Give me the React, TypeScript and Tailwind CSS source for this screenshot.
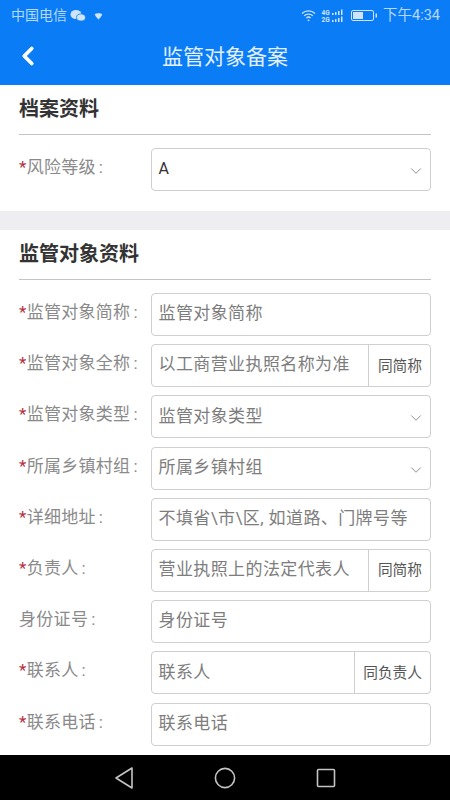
import React from 'react';
import { ChevronLeft, ChevronDown } from 'lucide-react';

type Field = {
  label: string;
  value: string;
  required?: boolean;
  select?: boolean;
  action?: string;
  dark?: boolean;
};

const riskFields: Field[] = [{ label: '风险等级', value: 'A', required: true, select: true, dark: true }];

const targetFields: Field[] = [
  { label: '监管对象简称', value: '监管对象简称', required: true },
  { label: '监管对象全称', value: '以工商营业执照名称为准', required: true, action: '同简称' },
  { label: '监管对象类型', value: '监管对象类型', required: true, select: true },
  { label: '所属乡镇村组', value: '所属乡镇村组', required: true, select: true },
  { label: '详细地址', value: '不填省\\市\\区, 如道路、门牌号等', required: true },
  { label: '负责人', value: '营业执照上的法定代表人', required: true, action: '同简称' },
  { label: '身份证号', value: '身份证号' },
  { label: '联系人', value: '联系人', required: true, action: '同负责人' },
  { label: '联系电话', value: '联系电话', required: true },
];

const FormRow = ({ field }: { field: Field }) => (
  <div className="flex h-[43px] items-start">
    <div className="w-[151px] shrink-0 pt-[9px] pl-[19px] text-[17px] leading-[20px] tracking-[0.3px] whitespace-nowrap text-[#8a8a8a]">
      {field.required && <span className="text-[#b5313f]">*</span>}
      {field.label}
      <span className="ml-[3px]">:</span>
    </div>
    <div className="flex h-[43px] w-[280px] items-center rounded-[4px] border border-[#cfcfcf] bg-white">
      <span
        className={`flex-1 pb-[1px] pl-[6.5px] whitespace-nowrap ${
          field.dark ? 'text-[16px] text-[#333]' : 'text-[17px] tracking-[0.4px] text-[#7d7d7d]'
        }`}
      >
        {field.value}
      </span>
      {field.select && <ChevronDown size={18} strokeWidth={1.1} className="mr-[5px] mt-[3px] text-[#777]" />}
      {field.action && (
        <span className="flex h-full items-center border-l border-[#cfcfcf] pr-[8px] pl-[8.5px] text-[14.7px] whitespace-nowrap text-[#555]">
          {field.action}
        </span>
      )}
    </div>
  </div>
);

const SectionTitle = ({ title }: { title: string }) => (
  <div className="mx-[19px] mb-[13px] flex h-[50px] items-center border-b border-[#c4c4c4] pb-[1px] text-[20px] font-bold text-[#333]">
    {title}
  </div>
);

export default function App() {
  return (
    <div
      className="flex h-[800px] w-[450px] flex-col overflow-hidden bg-white"
      style={{ fontFamily: '"Roboto", "Noto Sans CJK SC", sans-serif' }}
    >
      <header className="h-[85px] shrink-0 bg-[#0a7cf6]">
        <div className="flex h-[31px] items-center justify-between pr-[10px] pl-[11px] text-[14px] text-[#b5d8fb]">
          <div className="flex items-center gap-[3px]">
            <span>中国电信</span>
            <svg width="16" height="13" viewBox="0 0 16 13" fill="#cfe4fb">
              <ellipse cx="6" cy="5.5" rx="5.5" ry="4.6" />
              <ellipse cx="11" cy="8.5" rx="4.5" ry="3.6" stroke="#0a7cf6" strokeWidth="0.8" />
            </svg>
            <svg width="9" height="8" viewBox="0 0 12 10" fill="#cfe4fb" className="ml-[5px]">
              <path d="M1 2.5C3 0.8 9 0.8 11 2.5C10.5 5 8 7 6 9.5C4 7 1.5 5 1 2.5Z" />
            </svg>
          </div>
          <div className="flex items-center">
            <svg width="15" height="13" viewBox="0 0 15 13" fill="none" stroke="#cfe4fb" strokeWidth="1.3" className="mr-[5px]">
              <path d="M1 4.5C4.5 1 10.5 1 14 4.5" />
              <path d="M3.2 6.8C5.5 4.6 9.5 4.6 11.8 6.8" />
              <path d="M5.4 9C6.5 8 8.5 8 9.6 9" />
              <circle cx="7.5" cy="11.3" r="0.9" fill="#cfe4fb" stroke="none" />
            </svg>
            <svg width="25" height="14" viewBox="0 0 25 14" fill="#cfe4fb" className="mr-[5px]">
              <rect x="11" y="4" width="1.5" height="2" />
              <rect x="14" y="3" width="1.5" height="3" />
              <rect x="17" y="2" width="1.5" height="4" />
              <rect x="20" y="0.5" width="1.5" height="5.5" />
              <rect x="11" y="11" width="1.5" height="2" />
              <rect x="14" y="10" width="1.5" height="3" />
              <rect x="17" y="9" width="1.5" height="4" />
              <rect x="20" y="7.5" width="1.5" height="5.5" />
              <text x="0.5" y="6" fontSize="6.5" fontWeight="700">4G</text>
              <text x="0.5" y="13" fontSize="6.5" fontWeight="700">2G</text>
            </svg>
            <svg width="27" height="11" viewBox="0 0 27 11" className="mr-[5px]">
              <rect x="0.5" y="0.5" width="22" height="10" rx="1.5" fill="none" stroke="#cfe4fb" />
              <rect x="2" y="2" width="10" height="7" fill="#cfe4fb" />
              <rect x="24.5" y="3.5" width="1.5" height="4" fill="#cfe4fb" />
            </svg>
            <span className="text-[14.5px]">下午4:34</span>
          </div>
        </div>
        <div className="relative flex h-[54px] items-center justify-center text-[21px] text-[#e3f0fd]">
          <ChevronLeft size={30} strokeWidth={3} className="absolute top-[10px] left-[13px] text-white" />
          监管对象备案
        </div>
      </header>

      <main className="flex-1 overflow-hidden">
        <section className="pb-[20px]">
          <SectionTitle title="档案资料" />
          {riskFields.map((field) => (
            <FormRow key={field.label} field={field} />
          ))}
        </section>
        <div className="h-[19px] bg-[#eeeef2]" />
        <section>
          <SectionTitle title="监管对象资料" />
          <div className="flex flex-col gap-[8.2px]">
            {targetFields.map((field) => (
              <FormRow key={field.label} field={field} />
            ))}
          </div>
        </section>
      </main>

      <nav className="flex h-[45px] shrink-0 items-center justify-center gap-[80px] bg-black">
        <svg width="20" height="24" viewBox="0 0 20 24" fill="none" stroke="#c4c4c4" strokeWidth="1.6" strokeLinejoin="round">
          <path d="M18 2V22L2 12Z" />
        </svg>
        <svg width="22" height="22" viewBox="0 0 22 22" fill="none" stroke="#c4c4c4" strokeWidth="1.6">
          <circle cx="11" cy="11" r="9.6" />
        </svg>
        <svg width="20" height="20" viewBox="0 0 20 20" fill="none" stroke="#c4c4c4" strokeWidth="1.6" strokeLinejoin="round">
          <rect x="1.5" y="1.5" width="17" height="17" rx="1" />
        </svg>
      </nav>
    </div>
  );
}
